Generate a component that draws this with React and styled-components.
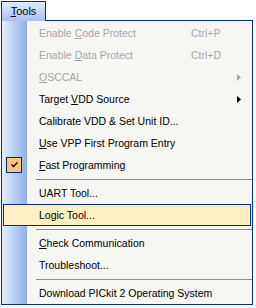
import React from 'react';
import styled, { createGlobalStyle } from 'styled-components';

const Global = createGlobalStyle`
  html, body {
    margin: 0;
    padding: 0;
    background: #fff;
  }
  body {
    font-family: "Liberation Sans", Arial, sans-serif;
    font-size: 10.5px;
    color: #000;
  }
`;

const Frame = styled.div`
  width: 252px;
  padding: 1px 0 0 1px;
`;

const Header = styled.div`
  display: flex;
  height: 20px;
`;

const Tab = styled.div`
  width: 45px;
  box-sizing: border-box;
  border: 1px solid #002d96;
  border-bottom: none;
  background: linear-gradient(to bottom, #e0eafd, #a9c1f1);
  display: flex;
  align-items: center;
  justify-content: center;
  padding-bottom: 1px;
  font-size: 11px;
`;

const Filler = styled.div`
  flex: 1;
  border-bottom: 1px solid #002d96;
`;

const Menu = styled.div`
  border: 1px solid #002d96;
  border-top: none;
  padding: 1px 0 0 0;
  background: linear-gradient(to right, #e4eefd 0, #8eb0e6 25px, #f6f6f3 25px);
`;

const Item = styled.div`
  display: flex;
  align-items: center;
  height: 22px;
  box-sizing: border-box;
  margin: 0 1px;
  border: 1px solid ${p => (p.$active ? '#002d96' : 'transparent')};
  background: ${p => (p.$active ? '#ffeec2' : 'transparent')};
  color: ${p => (p.$disabled ? '#a7a6aa' : '#000')};
  white-space: nowrap;
`;

const Gutter = styled.div`
  width: 35px;
  flex: 0 0 35px;
  display: flex;
  align-items: center;
  padding-left: 2px;
  box-sizing: border-box;
`;

const CheckBox = styled.div`
  width: 16px;
  height: 16px;
  box-sizing: border-box;
  border: 1px solid #0a246a;
  background: #ffc47c;
  display: flex;
  align-items: center;
  justify-content: center;
`;

const Label = styled.span`
  min-width: 152px;
  flex: 0 0 auto;
`;

const Shortcut = styled.span`
  flex: 1;
  color: #a7a6aa;
`;

const ArrowCell = styled.div`
  width: 13px;
  flex: 0 0 13px;
  display: flex;
  align-items: center;
`;

const Separator = styled.div`
  height: 6px;
  margin-left: 34px;
  display: flex;
  align-items: center;
  &::after {
    content: '';
    flex: 1;
    height: 1px;
    background: #6f8ecd;
  }
`;

const Key = styled.span`
  text-decoration: underline;
`;

const Arrow = ({ color }) => (
  <svg width="4" height="7" viewBox="0 0 4 7">
    <polygon points="0,0 4,3.5 0,7" fill={color} />
  </svg>
);

const Tick = () => (
  <svg width="7" height="6" viewBox="0 0 7 6">
    <path d="M0.5 2.5 L2.5 4.5 L6.5 0.5" stroke="#000" strokeWidth="1.4" fill="none" />
  </svg>
);

const MenuItem = ({ children, shortcut, arrow, disabled, active, checked }) => (
  <Item $disabled={disabled} $active={active}>
    <Gutter>
      {checked && (
        <CheckBox>
          <Tick />
        </CheckBox>
      )}
    </Gutter>
    <Label>{children}</Label>
    <Shortcut>{shortcut}</Shortcut>
    <ArrowCell>{arrow && <Arrow color={disabled ? '#a7a6aa' : '#000'} />}</ArrowCell>
  </Item>
);

export default function App() {
  return (
    <Frame>
      <Global />
      <Header>
        <Tab>
          <span><Key>T</Key>ools</span>
        </Tab>
        <Filler />
      </Header>
      <Menu>
        <MenuItem disabled shortcut="Ctrl+P">Enable <Key>C</Key>ode Protect</MenuItem>
        <MenuItem disabled shortcut="Ctrl+D">Enable <Key>D</Key>ata Protect</MenuItem>
        <MenuItem disabled arrow><Key>O</Key>SCCAL</MenuItem>
        <MenuItem arrow>Target <Key>V</Key>DD Source</MenuItem>
        <MenuItem>Calibrate VDD &amp; Set Unit ID...</MenuItem>
        <MenuItem><Key>U</Key>se VPP First Program Entry</MenuItem>
        <MenuItem checked><Key>F</Key>ast Programming</MenuItem>
        <Separator />
        <MenuItem>UART Tool...</MenuItem>
        <MenuItem active>Logic Tool...</MenuItem>
        <Separator />
        <MenuItem><Key>C</Key>heck Communication</MenuItem>
        <MenuItem>Troubleshoot...</MenuItem>
        <Separator />
        <MenuItem>Download PICkit 2 Operating System</MenuItem>
      </Menu>
    </Frame>
  );
}
